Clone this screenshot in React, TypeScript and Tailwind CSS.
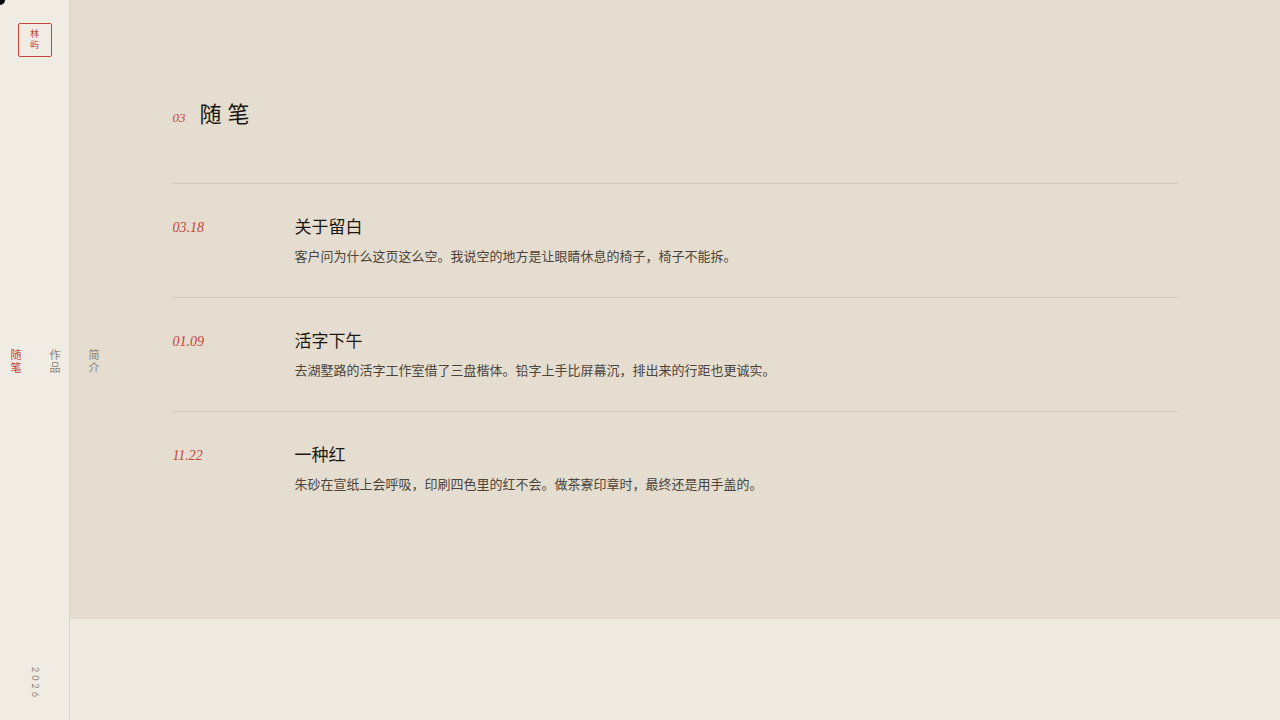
const SERIF = "font-['Liberation_Serif','Noto_Sans_CJK_SC',serif]"

const notes = [
  {
    date: '03.18',
    title: '关于留白',
    text: '客户问为什么这页这么空。我说空的地方是让眼睛休息的椅子，椅子不能拆。',
  },
  {
    date: '01.09',
    title: '活字下午',
    text: '去湖墅路的活字工作室借了三盘楷体。铅字上手比屏幕沉，排出来的行距也更诚实。',
  },
  {
    date: '11.22',
    title: '一种红',
    text: '朱砂在宣纸上会呼吸，印刷四色里的红不会。做茶寮印章时，最终还是用手盖的。',
  },
]

const links = [
  { label: '随笔', href: '#notes', active: true },
  { label: '作品', href: '#works', active: false },
  { label: '简介', href: '#about', active: false },
]

function Sidebar() {
  return (
    <aside className="sticky top-0 z-10 flex h-screen w-[70px] shrink-0 flex-col justify-between border-r border-[#dcd7cb] bg-[#f0ebe3] pt-[23px] pb-5">
      <a
        href="#top"
        className="flex size-[34px] items-center justify-center self-center rounded-xs border border-[#c2453a] text-[9px] leading-[11px] text-[#c2453a]"
      >
        <span className="w-[9px] break-all">林屿</span>
      </a>
      {/* the last link hangs over the page edge */}
      <nav className="flex gap-[26px] pl-2">
        {links.map((link) => (
          <a
            key={link.href}
            href={link.href}
            className={`shrink-0 text-[11px] leading-[13px] tracking-[2px] [writing-mode:vertical-rl] ${
              link.active ? 'text-[#c2453a]' : 'text-[#8b8374]'
            }`}
          >
            {link.label}
          </a>
        ))}
      </nav>
      <span className="self-center font-['Lato',sans-serif] text-[9px] leading-3 tracking-[3px] text-[#8b8374] [writing-mode:vertical-rl]">
        2026
      </span>
    </aside>
  )
}

export default function App() {
  return (
    <div id="top" className={`flex min-h-screen overflow-x-clip bg-[#f0ebe0] ${SERIF}`}>
      <div className="pointer-events-none fixed -top-[5px] -left-[5px] z-20 size-[10px] rounded-full bg-black" />
      <Sidebar />
      <main className="min-w-0 flex-1">
        <section id="notes" className="bg-[#e5ddcf] px-[8vw] pt-24 pb-[94px]">
          <header className="mb-[49px] flex items-baseline gap-[14px]">
            <span className="text-[13px] text-[#c2453a] italic">03</span>
            <h2 className="text-[22px] leading-[38px] tracking-[6px] text-[#1c1814]">随笔</h2>
          </header>
          <ul>
            {notes.map((note) => (
              <li
                key={note.date}
                className="grid grid-cols-[90px_1fr] gap-8 border-t border-[#cfc7b8] py-7"
              >
                <time className="text-sm leading-8 text-[#c2453a] italic">{note.date}</time>
                <div>
                  <h3 className="text-[17px] leading-8 text-[#1c1814]">{note.title}</h3>
                  <p className="text-[13px] leading-[25px] text-[#4c453b]">{note.text}</p>
                </div>
              </li>
            ))}
          </ul>
        </section>
      </main>
    </div>
  )
}
